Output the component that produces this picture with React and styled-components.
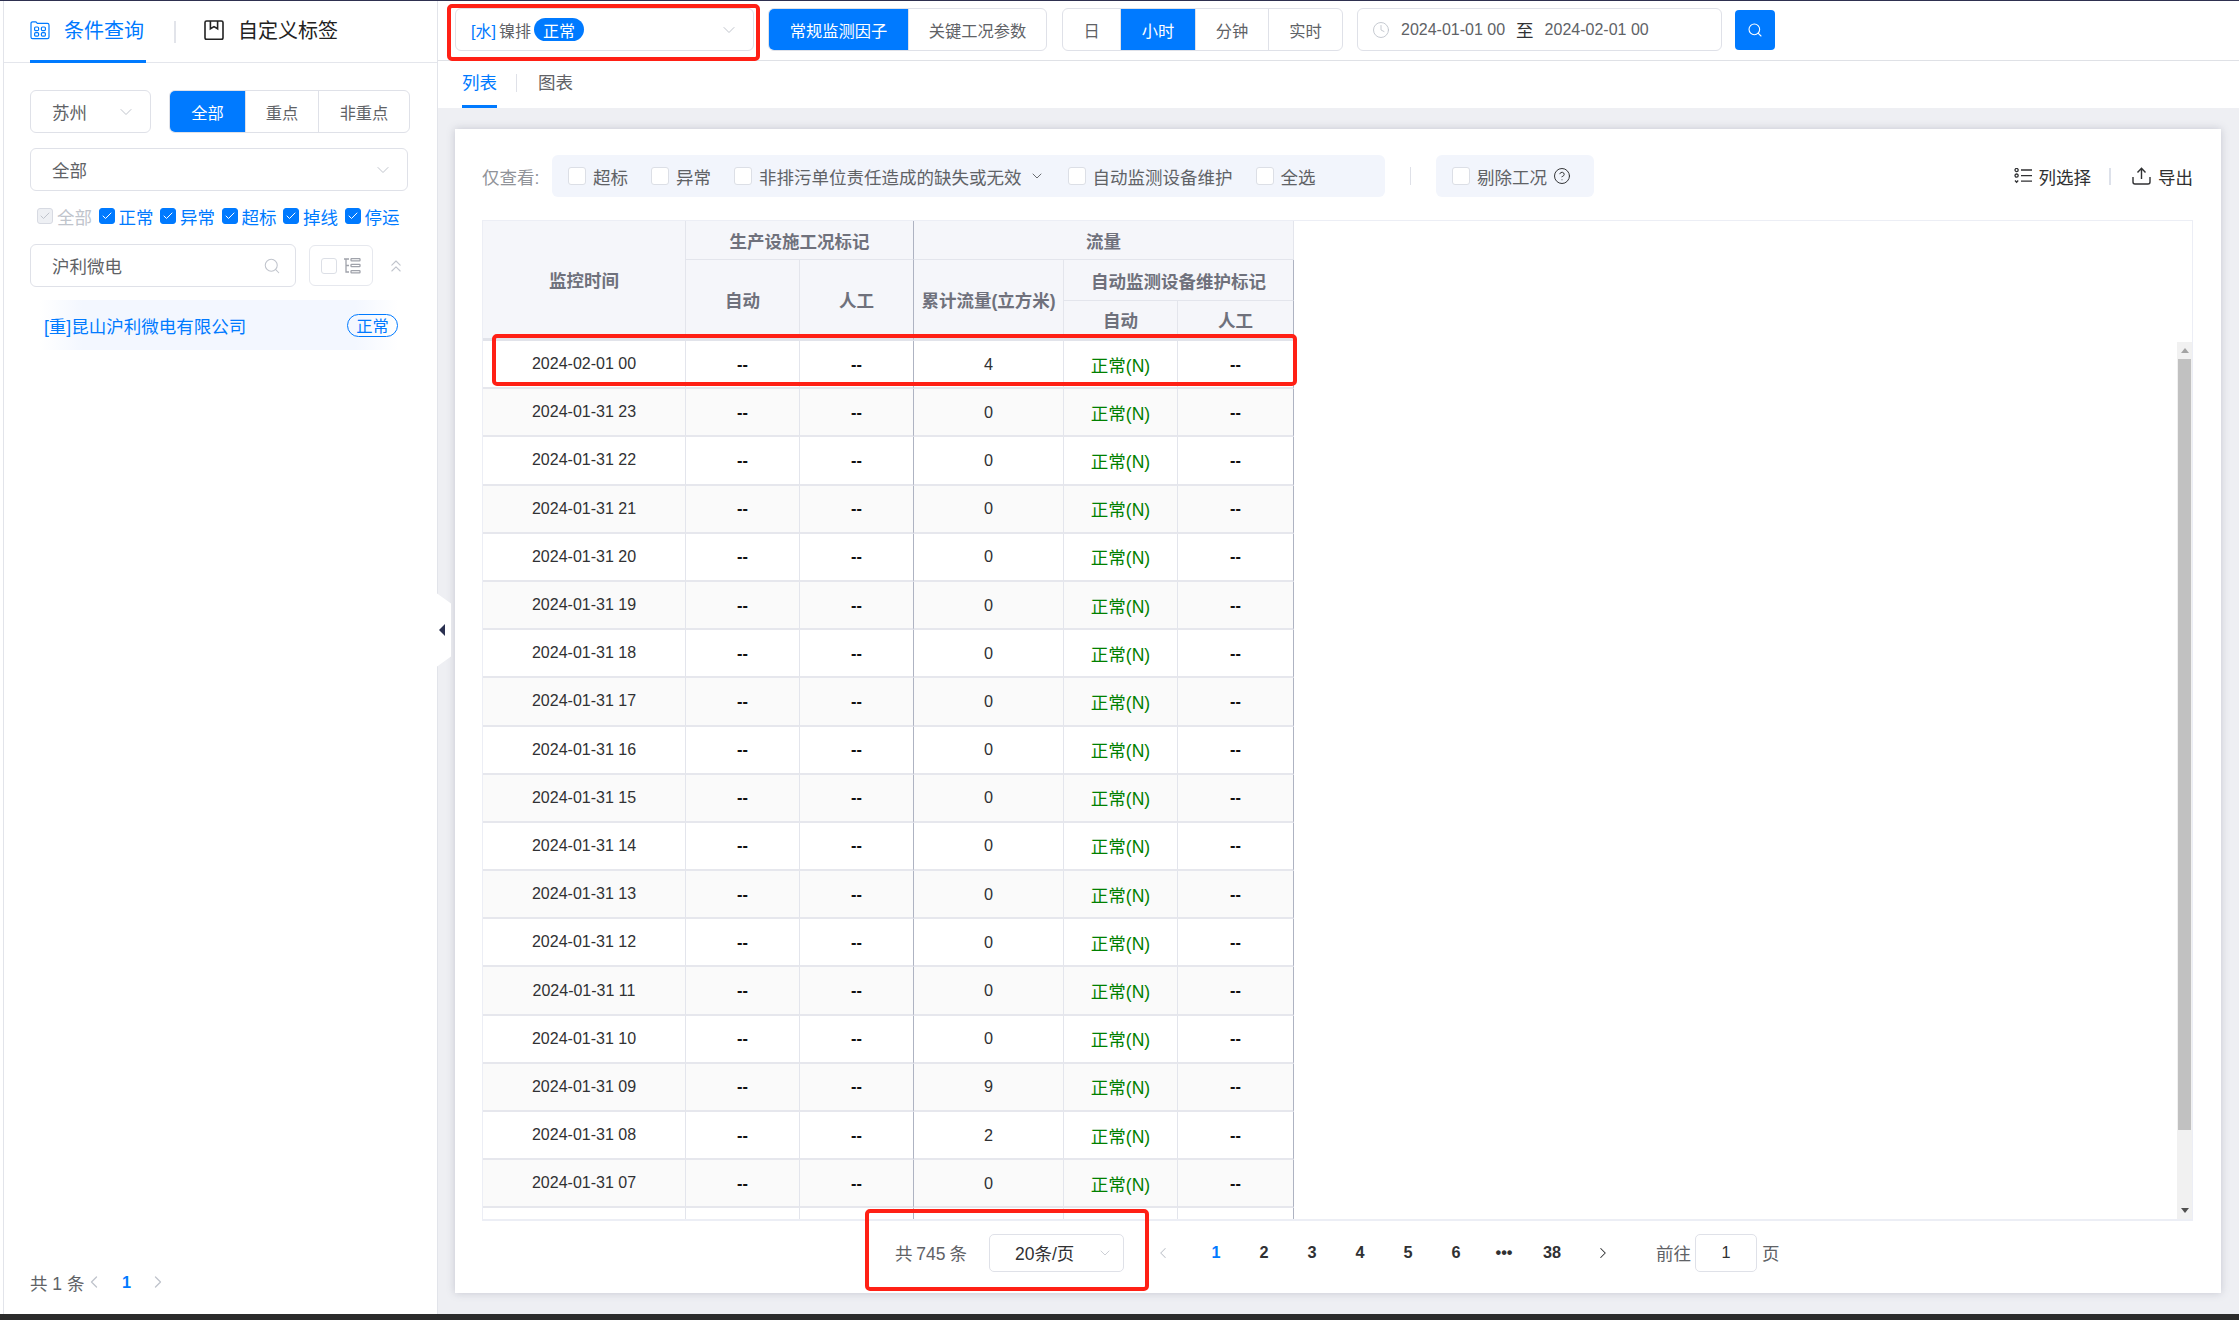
import React from 'react';
import styled, { createGlobalStyle } from 'styled-components';
import { ChevronDown, ChevronLeft, ChevronRight, ChevronsUp, Search, Clock, CircleHelp, Check } from 'lucide-react';

const BLUE = '#007aff';
const FONT = '"Liberation Sans","Noto Sans CJK SC",sans-serif';

const Global = createGlobalStyle`
  html, body { margin: 0; padding: 0; background: #fff; }
  body { font-family: ${FONT}; color: #606266; }
  * { box-sizing: border-box; }
`;

const Page = styled.div`
  position: relative;
  width: 2239px;
  height: 1320px;
  overflow: hidden;
  display: flex;
  flex-direction: column;
  background: #fff;
`;
const TopLine = styled.div`
  height: 1px;
  flex: none;
  background: #2e3050;
`;
const Body = styled.div`
  flex: 1;
  min-height: 0;
  display: flex;
`;
const BottomBar = styled.div`
  height: 6px;
  flex: none;
  background: #2b2b2b;
`;

/* sidebar */
const Sidebar = styled.aside`
  position: relative;
  width: 435px;
  flex: none;
  margin-left: 3px;
  margin-right: -3px;
  border-left: 1px solid #e2e4ea;
  border-right: 1px solid #e2e4ea;
  display: flex;
  flex-direction: column;
  background: #fff;
`;
const SideTabs = styled.div`
  height: 62px;
  flex: none;
  display: flex;
  align-items: stretch;
  padding-left: 26px;
  border-bottom: 1px solid #e4e6ec;
`;
const SideTab = styled.div`
  display: flex;
  align-items: center;
  gap: 14px;
  font-size: 20px;
  color: ${p => (p.$active ? BLUE : '#222')};
  padding-bottom: 2px;
  width: ${p => (p.$active ? '116px' : 'auto')};
  border-bottom: 3px solid ${p => (p.$active ? BLUE : 'transparent')};
  height: 62px;
`;
const SideTabSep = styled.div`
  width: 2px;
  height: 22px;
  align-self: center;
  background: #e2e4ea;
  margin: 0 28px;
`;
const SideBody = styled.div`
  flex: 1;
  min-height: 0;
  display: flex;
  flex-direction: column;
  padding: 27px 26px 0 26px;
`;
const SideRow = styled.div`
  display: flex;
  align-items: center;
`;
const Select = styled.div`
  display: flex;
  align-items: center;
  justify-content: space-between;
  width: ${p => p.$w}px;
  height: 43px;
  padding: 0 14px 0 21px;
  border: 1px solid #dfe1e8;
  border-radius: 6px;
  background: #fff;
  color: #606266;
  font-size: 17.5px;
  svg { color: #c0c4cc; flex: none; }
`;
const Segmented = styled.div`
  display: flex;
  height: ${p => p.$h || 43}px;
  border: 1px solid #dfe1e8;
  border-radius: 6px;
  overflow: hidden;
  background: #fff;
`;
const Segment = styled.div`
  width: ${p => p.$w}px;
  display: flex;
  align-items: center;
  justify-content: center;
  font-size: 16.25px;
  color: ${p => (p.$active ? '#fff' : '#606266')};
  background: ${p => (p.$active ? BLUE : 'transparent')};
  & + & { border-left: 1px solid ${p => (p.$active ? BLUE : '#dfe1e8')}; }
`;
const StatusRow = styled.div`
  display: flex;
  align-items: center;
  gap: 6.5px;
  padding-left: 7px;
  margin-top: 17px;
  height: 16px;
`;
const StatusItem = styled.div`
  display: flex;
  align-items: center;
  gap: 4px;
  font-size: 17.5px;
  color: ${p => (p.$off ? '#c0c4cc' : BLUE)};
`;
const Box = styled.span`
  width: ${p => p.$s || 18}px;
  height: ${p => p.$s || 18}px;
  flex: none;
  display: inline-flex;
  align-items: center;
  justify-content: center;
  border-radius: 3px;
  border: 1px solid ${p => (p.$on ? BLUE : p.$off ? '#d7dae2' : '#dcdfe6')};
  background: ${p => (p.$on ? BLUE : p.$off ? '#eef0f4' : '#fff')};
  color: ${p => (p.$off ? '#c0c4cc' : '#fff')};
`;
const SearchInput = styled(Select)`
  margin-right: 13px;
  svg { color: #c0c4cc; }
`;
const TreeBox = styled.div`
  width: 64px;
  height: 41px;
  display: flex;
  align-items: center;
  justify-content: center;
  gap: 6px;
  border: 1px solid #e6e8ee;
  border-radius: 6px;
  color: #a8abb2;
`;
const Collapse = styled.div`
  margin-left: 13px;
  display: flex;
  color: #c0c4cc;
`;
const CompanyRow = styled.div`
  display: flex;
  align-items: center;
  justify-content: space-between;
  margin: 13px 13px 0 10px;
  height: 50px;
  padding: 0 0 0 4px;
  background: linear-gradient(90deg, #fff 0, #f3f7ff 12%, #f3f7ff 88%, #fff 100%);
`;
const CompanyName = styled.span`
  font-size: 17.5px;
  color: ${BLUE};
`;
const OutlineTag = styled.span`
  width: 51px;
  height: 23px;
  display: flex;
  align-items: center;
  justify-content: center;
  border: 1.5px solid ${BLUE};
  border-radius: 12px;
  font-size: 16.25px;
  color: ${BLUE};
`;
const SidePager = styled.div`
  margin-top: auto;
  padding-bottom: 20px;
  display: flex;
  align-items: center;
  font-size: 17.5px;
  color: #606266;
  height: 44px;
  svg { color: #c0c4cc; }
`;
const SidePage = styled.span`
  width: 44px;
  text-align: center;
  font-weight: 700;
  color: ${BLUE};
  font-size: 16.25px;
`;
const Toggle = styled.div`
  position: absolute;
  left: 431px;
  top: 591px;
  width: 16px;
  height: 76px;
  background: #fff;
  clip-path: polygon(0 0, 100% 15%, 100% 85%, 0 100%);
  display: flex;
  align-items: center;
  padding-left: 4px;
  z-index: 3;
`;
const Triangle = styled.span`
  width: 0;
  height: 0;
  border-style: solid;
  border-width: 6.5px 6px 6.5px 0;
  border-color: transparent #2a3050 transparent transparent;
`;

/* main */
const Main = styled.main`
  flex: 1;
  min-width: 0;
  margin-left: 0;
  display: flex;
  flex-direction: column;
`;
const Header = styled.header`
  height: 60px;
  flex: none;
  display: flex;
  align-items: center;
  padding: 0 0 2px 20px;
  border-bottom: 1px solid #dfe1e6;
`;
const FactorSelect = styled(Select)`
  padding: 0 14px 0 15px;
  margin-right: 14px;
`;
const FactorLabel = styled.span`
  display: flex;
  align-items: center;
  font-size: 16px;
  color: #606266;
  b { font-weight: 400; color: ${BLUE}; margin-right: 3px; }
`;
const FilledTag = styled.span`
  margin-left: 3px;
  width: 50px;
  height: 23px;
  border-radius: 12px;
  background: ${BLUE};
  color: #fff;
  font-size: 16px;
  display: flex;
  align-items: center;
  justify-content: center;
`;
const GroupGap = styled.div`
  width: ${p => p.$w}px;
  flex: none;
`;
const DateRange = styled.div`
  width: 365px;
  height: 43px;
  display: flex;
  align-items: center;
  padding-left: 14px;
  border: 1px solid #dfe1e8;
  border-radius: 6px;
  font-size: 16px;
  color: #606266;
  svg { color: #c0c4cc; margin-right: 11px; }
`;
const DateSep = styled.span`
  color: #303133;
  margin: 0 11px;
  font-size: 17.5px;
`;
const SearchButton = styled.button`
  margin-left: 13px;
  width: 40px;
  height: 40px;
  padding: 0;
  border: none;
  border-radius: 4px;
  background: ${BLUE};
  color: #fff;
  display: flex;
  align-items: center;
  justify-content: center;
`;
const ViewTabs = styled.div`
  height: 47px;
  flex: none;
  display: flex;
  padding-left: 27px;
  font-size: 17.5px;
`;
const ViewTab = styled.div`
  width: 35px;
  white-space: nowrap;
  display: flex;
  align-items: center;
  height: 47px;
  padding-bottom: 3px;
  color: ${p => (p.$active ? BLUE : '#606266')};
  border-bottom: 3px solid ${p => (p.$active ? BLUE : 'transparent')};
`;
const ViewSep = styled.div`
  width: 1px;
  height: 18px;
  margin: 13px 21px 0 19px;
  background: #dfe1e8;
`;
const Content = styled.div`
  flex: 1;
  min-height: 0;
  padding: 21px 18px 21px 20px;
  background: #eeeff3;
`;
const Card = styled.section`
  height: 100%;
  background: #fff;
  padding: 26px 28px 0 27px;
  box-shadow: 0 0 8px rgba(90, 95, 120, 0.28);
  display: flex;
  flex-direction: column;
`;
const FilterRow = styled.div`
  height: 42px;
  flex: none;
  display: flex;
  align-items: center;
`;
const FilterLabel = styled.span`
  width: 70px;
  font-size: 17.5px;
  color: #909399;
`;
const FilterBand = styled.div`
  height: 42px;
  width: ${p => p.$w}px;
  display: flex;
  align-items: center;
  gap: 23px;
  padding-left: 16px;
  background: #f2f5fc;
  border-radius: 6px;
`;
const FilterItem = styled.div`
  display: flex;
  align-items: center;
  gap: 7px;
  font-size: 17.5px;
  color: #606266;
  white-space: nowrap;
  svg { flex: none; }
`;
const FilterSep = styled.div`
  width: 1px;
  height: 18px;
  margin: 0 25px;
  background: #dfe1e8;
`;
const Actions = styled.div`
  margin-left: auto;
  display: flex;
  align-items: center;
  font-size: 17.5px;
  color: #303133;
`;
const Action = styled.span`
  display: flex;
  align-items: center;
  gap: 7px;
`;
const ActionSep = styled.div`
  width: 2px;
  height: 17px;
  margin: 0 21px 0 18px;
  background: #dde1ea;
`;
const TableArea = styled.div`
  margin-top: 23px;
  height: 1001px;
  flex: none;
  display: flex;
  justify-content: space-between;
  border: 1px solid #eceef5;
  border-bottom-width: 2px;
  overflow: hidden;
`;
const Table = styled.table`
  width: 811px;
  flex: none;
  table-layout: fixed;
  border-collapse: separate;
  border-spacing: 0;
  align-self: flex-start;
`;
const HeadCell = styled.th`
  height: ${p => p.$h}px;
  padding: 0;
  background: #f5f6fa;
  color: #6f717c;
  font-size: 17.5px;
  font-weight: 700;
  text-align: center;
  white-space: nowrap;
  border-right: 1px solid ${p => (p.$strong ? '#aeb3c2' : '#e3e5ec')};
  border-bottom: ${p => (p.$last ? '3px solid #e1e3ea' : '1px solid #e3e5ec')};
`;
const HeadRow = styled.tr``;
const DataRow = styled.tr`
  background: ${p => (p.$alt ? '#fafafa' : '#fff')};
`;
const Cell = styled.td`
  height: 48.2px;
  padding: 0;
  text-align: center;
  font-size: ${p => (p.$time ? 16 : 16.25)}px;
  color: #303133;
  border-right: 1px solid ${p => (p.$strong ? '#aeb3c2' : '#e3e5ec')};
  border-bottom: 2px solid #e6e7ed;
`;
const Dash = styled.b`
  font-weight: 700;
  color: #111;
`;
const Normal = styled.span`
  color: #008000;
  font-size: 17.5px;
`;
const ScrollTrack = styled.div`
  width: 15px;
  flex: none;
  margin-top: 121px;
  background: #f1f1f1;
  display: flex;
  flex-direction: column;
  align-items: center;
  justify-content: space-between;
`;
const ScrollArrow = styled.span`
  height: 17px;
  display: flex;
  align-items: center;
  &::before {
    content: '';
    border-left: 4px solid transparent;
    border-right: 4px solid transparent;
    ${p => (p.$down ? 'border-top: 5px solid #505050;' : 'border-bottom: 5px solid #a3a3a3;')}
  }
`;
const ScrollThumb = styled.div`
  width: 13px;
  height: 771px;
  background: #c1c1c1;
  margin-bottom: auto;
`;
const Pager = styled.div`
  height: 72px;
  flex: none;
  display: flex;
  align-items: center;
  padding-left: 413px;
  padding-bottom: 9px;
  font-size: 16.25px;
  color: #606266;
`;
const PagerTotal = styled.span`
  width: 94px;
  font-size: 17.5px;
  word-spacing: -1px;
`;
const PageSize = styled(Select)`
  height: 38px;
  padding: 0 10px 0 25px;
  font-size: 17.5px;
  color: #303133;
  border-radius: 5px;
  margin-right: 15px;
`;
const PageArrow = styled.span`
  width: 48px;
  display: flex;
  justify-content: center;
  color: ${p => (p.$off ? '#c0c4cc' : '#303133')};
`;
const PageNum = styled.span`
  width: 48px;
  text-align: center;
  font-weight: 700;
  font-size: 16.25px;
  color: ${p => (p.$active ? BLUE : '#303133')};
`;
const PagerSpacer = styled.div`
  width: ${p => p.$w}px;
  flex: none;
`;
const Goto = styled.span`
  font-size: 17.5px;
  color: #606266;
`;
const GotoInput = styled.div`
  width: 62px;
  height: 38px;
  margin: 0 5px 0 4px;
  border: 1px solid #dfe1e8;
  border-radius: 5px;
  display: flex;
  align-items: center;
  justify-content: center;
  font-size: 16.25px;
  color: #303133;
`;
const Annotation = styled.div`
  position: absolute;
  left: ${p => p.$x}px;
  top: ${p => p.$y}px;
  width: ${p => p.$w}px;
  height: ${p => p.$h}px;
  border: 4px solid #ff2015;
  border-radius: 5px;
  z-index: 5;
`;

const QueryIcon = () => (
  <svg width="20" height="20" viewBox="0 0 20 20" fill="none" stroke={BLUE} strokeWidth="1.2">
    <path d="M1 3.5c0-1 .7-1.7 1.6-1.7h3c.8 0 1 .7 1.6 1.5h10.2c1 0 1.6.7 1.6 1.6V17c0 1-.7 1.6-1.6 1.6H2.6C1.7 18.6 1 18 1 17z" />
    <rect x="4.6" y="7" width="4" height="3.6" rx="1.1" />
    <rect x="11.4" y="7" width="4" height="3.6" rx="1.1" />
    <rect x="4.6" y="12.6" width="4" height="3.6" rx="1.1" />
    <rect x="11.4" y="12.6" width="4" height="3.6" rx="1.1" />
  </svg>
);
const BookmarkIcon = () => (
  <svg width="20" height="20" viewBox="0 0 20 20" fill="none" stroke="#222" strokeWidth="1.6">
    <rect x="1" y="1" width="18" height="18.4" rx="1.6" />
    <path d="M6.4 1v7.8L10 6.6l3.6 2.2V1" />
  </svg>
);
const TreeIcon = () => (
  <svg width="18" height="16" viewBox="0 0 18 16" fill="none" stroke="#a0a3ab" strokeWidth="1.3">
    <path d="M1 1h5M3 1v13h3M3 7.5h3" />
    <rect x="8" y="0.6" width="9" height="2.2" rx=".6" />
    <rect x="8" y="6.4" width="9" height="2.2" rx=".6" />
    <rect x="8" y="12.6" width="9" height="2.2" rx=".6" />
  </svg>
);
const ColumnsIcon = () => (
  <svg width="18" height="16" viewBox="0 0 18 16" fill="none" stroke="#303133" strokeWidth="1.3">
    <circle cx="2.6" cy="2" r="1.6" />
    <circle cx="2.6" cy="7.6" r="1.6" />
    <path d="M1 12.5l1.6 1.8 1.6-1.8M7 2h11M7 7.6h11M7 13.2h11" />
  </svg>
);
const UploadIcon = () => (
  <svg width="19" height="18" viewBox="0 0 19 18" fill="none" stroke="#303133" strokeWidth="1.4">
    <path d="M5.5 5.5L9.5 1.3l4 4.2M9.5 1.3V12M1 10v5c0 1.2.8 2 2 2h13c1.2 0 2-.8 2-2v-5" />
  </svg>
);

const CheckMark = ({ s }) => <Check size={s} strokeWidth={2} />;

const statuses = ['正常', '异常', '超标', '掉线', '停运'];
const rows = [
  ['2024-02-01 00', 4], ['2024-01-31 23', 0], ['2024-01-31 22', 0], ['2024-01-31 21', 0],
  ['2024-01-31 20', 0], ['2024-01-31 19', 0], ['2024-01-31 18', 0], ['2024-01-31 17', 0],
  ['2024-01-31 16', 0], ['2024-01-31 15', 0], ['2024-01-31 14', 0], ['2024-01-31 13', 0],
  ['2024-01-31 12', 0], ['2024-01-31 11', 0], ['2024-01-31 10', 0], ['2024-01-31 09', 9],
  ['2024-01-31 08', 2], ['2024-01-31 07', 0],
];
const colWidths = [203, 114, 114, 150, 114, 116];
const pages = ['1', '2', '3', '4', '5', '6', '•••', '38'];

export default function App() {
  return (
    <Page>
      <Global />
      <TopLine />
      <Body>
        <Sidebar>
          <SideTabs>
            <SideTab $active><QueryIcon />条件查询</SideTab>
            <SideTabSep />
            <SideTab><BookmarkIcon />自定义标签</SideTab>
          </SideTabs>
          <SideBody>
            <SideRow>
              <Select $w={121}>苏州<ChevronDown size={20} strokeWidth={1.2} /></Select>
              <GroupGap $w={18} />
              <Segmented>
                <Segment $w={75} $active>全部</Segment>
                <Segment $w={73}>重点</Segment>
                <Segment $w={91}>非重点</Segment>
              </Segmented>
            </SideRow>
            <SideRow style={{ marginTop: 15 }}>
              <Select $w={378}>全部<ChevronDown size={20} strokeWidth={1.2} /></Select>
            </SideRow>
            <StatusRow>
              <StatusItem $off><Box $s={16} $off><CheckMark s={12} /></Box>全部</StatusItem>
              {statuses.map(s => (
                <StatusItem key={s}><Box $s={16} $on><CheckMark s={12} /></Box>{s}</StatusItem>
              ))}
            </StatusRow>
            <SideRow style={{ marginTop: 20 }}>
              <SearchInput $w={266}>沪利微电<Search size={18} strokeWidth={1.4} /></SearchInput>
              <TreeBox><Box $s={16} /><TreeIcon /></TreeBox>
              <Collapse><ChevronsUp size={20} strokeWidth={1.3} /></Collapse>
            </SideRow>
            <CompanyRow>
              <CompanyName>[重]昆山沪利微电有限公司</CompanyName>
              <OutlineTag>正常</OutlineTag>
            </CompanyRow>
            <SidePager>
              共 1 条
              <ChevronLeft size={20} strokeWidth={1.6} />
              <SidePage>1</SidePage>
              <ChevronRight size={20} strokeWidth={1.6} />
            </SidePager>
          </SideBody>
          <Toggle><Triangle /></Toggle>
        </Sidebar>
        <Main>
          <Header>
            <FactorSelect $w={299}>
              <FactorLabel><b>[水]</b>镍排<FilledTag>正常</FilledTag></FactorLabel>
              <ChevronDown size={20} strokeWidth={1.2} />
            </FactorSelect>
            <Segmented>
              <Segment $w={139} $active>常规监测因子</Segment>
              <Segment $w={138}>关键工况参数</Segment>
            </Segmented>
            <GroupGap $w={15} />
            <Segmented>
              <Segment $w={57}>日</Segment>
              <Segment $w={75} $active>小时</Segment>
              <Segment $w={73}>分钟</Segment>
              <Segment $w={74}>实时</Segment>
            </Segmented>
            <GroupGap $w={14} />
            <DateRange>
              <Clock size={18} strokeWidth={1.2} />
              2024-01-01 00<DateSep>至</DateSep>2024-02-01 00
            </DateRange>
            <SearchButton aria-label="查询"><Search size={16} strokeWidth={1.6} /></SearchButton>
          </Header>
          <ViewTabs>
            <ViewTab $active>列表</ViewTab>
            <ViewSep />
            <ViewTab>图表</ViewTab>
          </ViewTabs>
          <Content>
            <Card>
              <FilterRow>
                <FilterLabel>仅查看:</FilterLabel>
                <FilterBand $w={833}>
                  <FilterItem><Box />超标</FilterItem>
                  <FilterItem><Box />异常</FilterItem>
                  <FilterItem><Box />非排污单位责任造成的缺失或无效<ChevronDown size={16} strokeWidth={1.4} /></FilterItem>
                  <FilterItem><Box />自动监测设备维护</FilterItem>
                  <FilterItem><Box />全选</FilterItem>
                </FilterBand>
                <FilterSep />
                <FilterBand $w={158}>
                  <FilterItem><Box />剔除工况<CircleHelp size={18} strokeWidth={1.3} color="#303133" style={{ marginLeft: -1 }} /></FilterItem>
                </FilterBand>
                <Actions>
                  <Action><ColumnsIcon />列选择</Action>
                  <ActionSep />
                  <Action><UploadIcon />导出</Action>
                </Actions>
              </FilterRow>
              <TableArea>
                <Table>
                  <colgroup>
                    {colWidths.map((w, i) => <col key={i} width={w} />)}
                  </colgroup>
                  <thead>
                    <HeadRow>
                      <HeadCell $h={39} $last rowSpan={3}>监控时间</HeadCell>
                      <HeadCell $h={39} colSpan={2} $strong>生产设施工况标记</HeadCell>
                      <HeadCell $h={39} colSpan={3}>流量</HeadCell>
                    </HeadRow>
                    <HeadRow>
                      <HeadCell $h={41} $last rowSpan={2}>自动</HeadCell>
                      <HeadCell $h={41} $last rowSpan={2} $strong>人工</HeadCell>
                      <HeadCell $h={41} $last rowSpan={2}>累计流量(立方米)</HeadCell>
                      <HeadCell $h={41} colSpan={2} $strong>自动监测设备维护标记</HeadCell>
                    </HeadRow>
                    <HeadRow>
                      <HeadCell $h={40} $last>自动</HeadCell>
                      <HeadCell $h={40} $last $strong>人工</HeadCell>
                    </HeadRow>
                  </thead>
                  <tbody>
                    {rows.map(([time, flow], i) => (
                      <DataRow key={time} $alt={i % 2 === 1}>
                        <Cell $time>{time}</Cell>
                        <Cell><Dash>--</Dash></Cell>
                        <Cell $strong><Dash>--</Dash></Cell>
                        <Cell>{flow}</Cell>
                        <Cell><Normal>正常(N)</Normal></Cell>
                        <Cell $strong><Dash>--</Dash></Cell>
                      </DataRow>
                    ))}
                    <DataRow>
                      <Cell /><Cell /><Cell $strong /><Cell /><Cell /><Cell $strong />
                    </DataRow>
                  </tbody>
                </Table>
                <ScrollTrack>
                  <ScrollArrow />
                  <ScrollThumb />
                  <ScrollArrow $down />
                </ScrollTrack>
              </TableArea>
              <Pager>
                <PagerTotal>共 745 条</PagerTotal>
                <PageSize $w={135}>20条/页<ChevronDown size={16} strokeWidth={1.2} /></PageSize>
                <PageArrow $off><ChevronLeft size={18} strokeWidth={1.4} /></PageArrow>
                <PagerSpacer $w={5} />
                {pages.map((p, i) => <PageNum key={p} $active={i === 0}>{p}</PageNum>)}
                <PagerSpacer $w={3} />
                <PageArrow><ChevronRight size={18} strokeWidth={1.4} /></PageArrow>
                <PagerSpacer $w={29} />
                <Goto>前往</Goto>
                <GotoInput>1</GotoInput>
                <Goto>页</Goto>
              </Pager>
            </Card>
          </Content>
        </Main>
      </Body>
      <BottomBar />
      <Annotation $x={447} $y={4} $w={313} $h={57} />
      <Annotation $x={492} $y={334} $w={805} $h={52} />
      <Annotation $x={865} $y={1209} $w={284} $h={82} />
    </Page>
  );
}
